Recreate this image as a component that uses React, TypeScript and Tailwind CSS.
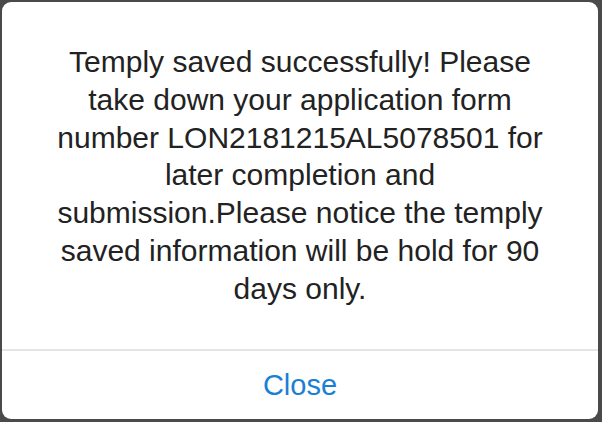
import React from 'react';

const lines = [
  'Temply saved successfully! Please',
  'take down your application form',
  'number LON2181215AL5078501 for',
  'later completion and',
  'submission.Please notice the temply',
  'saved information will be hold for 90',
  'days only.',
];

const App: React.FC = () => {
  return (
    <div className="w-[602px] h-[422px] bg-[#4a4a4a] pl-[2px] pt-[2px] pr-[4px] pb-[3px] font-['Liberation_Sans',Arial,sans-serif]">
      <div className="h-full bg-white rounded-[9px] flex flex-col overflow-hidden">
        {/* Message */}
        <div className="pt-[41px] pb-[41px] text-center text-[30px] leading-[37.8px] text-[#222222]">
          {lines.map((line) => (
            <div key={line} className="whitespace-nowrap">
              {line}
            </div>
          ))}
        </div>
        <div className="h-[2px] bg-[#e5e5e5]" />
        {/* Action */}
        <button className="flex-1 flex items-center justify-center text-[29px] text-[#1b7fd3] pt-[2px]">
          Close
        </button>
      </div>
    </div>
  );
};

export default App;
